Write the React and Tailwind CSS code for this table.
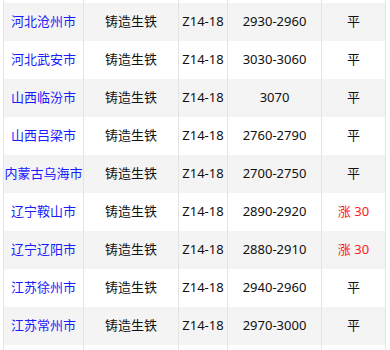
import React from "react";

const rows = [
  ["", "", "", "", ""],
  ["河北沧州市", "铸造生铁", "Z14-18", "2930-2960", "平"],
  ["河北武安市", "铸造生铁", "Z14-18", "3030-3060", "平"],
  ["山西临汾市", "铸造生铁", "Z14-18", "3070", "平"],
  ["山西吕梁市", "铸造生铁", "Z14-18", "2760-2790", "平"],
  ["内蒙古乌海市", "铸造生铁", "Z14-18", "2700-2750", "平"],
  ["辽宁鞍山市", "铸造生铁", "Z14-18", "2890-2920", "涨 30"],
  ["辽宁辽阳市", "铸造生铁", "Z14-18", "2880-2910", "涨 30"],
  ["江苏徐州市", "铸造生铁", "Z14-18", "2940-2960", "平"],
  ["江苏常州市", "铸造生铁", "Z14-18", "2970-3000", "平"],
  ["", "", "", "", ""],
];

export default function App() {
  return (
    <div
      className="w-[390px] h-[350px] overflow-hidden bg-white text-[13px] text-[#111]"
      style={{ fontFamily: '"Noto Sans", "Noto Sans CJK SC", sans-serif' }}
    >
      <div className="ml-[3px] w-[383px] -mt-[35px]">
        {rows.map((r, i) => (
          <div
            key={i}
            className={`flex h-[38px] ${i % 2 === 1 ? "bg-[#f4f4f4]" : "bg-white"}`}
          >
            <div className="w-[80px] shrink-0 border-l border-[#e4e4e4] flex items-center justify-center text-[#1a1aff] whitespace-nowrap">
              {r[0]}
            </div>
            <div className="w-[95px] shrink-0 border-l border-[#e4e4e4] flex items-center justify-center">
              {r[1]}
            </div>
            <div className="w-[49px] shrink-0 border-l border-[#e4e4e4] flex items-center justify-center">
              {r[2]}
            </div>
            <div className="w-[94px] shrink-0 border-l border-[#e4e4e4] flex items-center justify-center">
              {r[3]}
            </div>
            <div
              className={`w-[65px] shrink-0 border-l border-r border-[#e4e4e4] flex items-center justify-center ${
                r[4] === "平" ? "" : "text-[#ff1a1a]"
              }`}
            >
              {r[4]}
            </div>
          </div>
        ))}
      </div>
    </div>
  );
}
